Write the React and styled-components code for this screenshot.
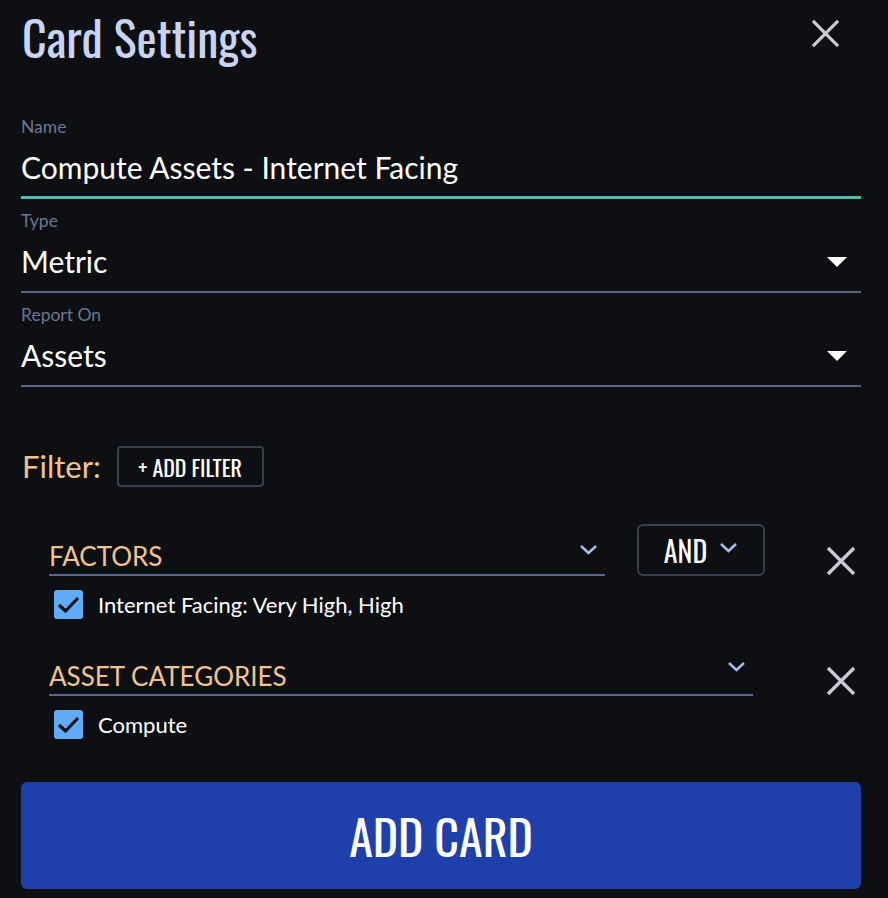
import React from 'react';
import styled, { createGlobalStyle } from 'styled-components';

const GlobalStyle = createGlobalStyle`
  html, body {
    margin: 0;
    padding: 0;
    background: #0e0f13;
  }
  body {
    font-family: Lato, "Noto Sans", sans-serif;
    color: #ffffff;
  }
  * {
    box-sizing: border-box;
  }
`;

const condensed = `"Oswald", "Liberation Sans Narrow", "DejaVu Sans Condensed", sans-serif`;

const Page = styled.div`
  width: 888px;
  min-height: 898px;
  padding: 0 27px 10px 21px;
  background: #0e0f13;
`;

const Header = styled.div`
  display: flex;
  justify-content: space-between;
  align-items: flex-start;
  padding-top: 9px;
  margin-bottom: 53px;
`;

const Title = styled.h1`
  margin: 0 0 0 1px;
  font-family: ${condensed};
  font-weight: 400;
  font-size: 48px;
  line-height: 55px;
  color: #c8d5f2;
`;

const IconButton = styled.button`
  display: flex;
  padding: 0;
  border: 0;
  background: none;
  cursor: pointer;
  margin-top: ${p => p.$top || 0}px;
  margin-right: ${p => p.$right || 0}px;
`;

const Field = styled.div`
  display: flex;
  flex-direction: column;
  margin-bottom: 12px;
`;

const FieldLabel = styled.label`
  font-size: 17.5px;
  line-height: 20px;
  color: #687891;
  margin-bottom: 12px;
`;

const FieldControl = styled.div`
  display: flex;
  align-items: center;
  justify-content: space-between;
  padding-bottom: ${p => (p.$active ? 10 : 11)}px;
  border-bottom: ${p => (p.$active ? '3px solid #4ebdb1' : '2px solid #5b6583')};
`;

const FieldValue = styled.span`
  font-size: 30px;
  line-height: 37px;
  color: #ffffff;
  white-space: nowrap;
`;

const Caret = styled.svg`
  margin-right: 14px;
`;

const FilterBar = styled.div`
  display: flex;
  align-items: center;
  gap: 16px;
  margin-top: 59px;
`;

const FilterLabel = styled.span`
  font-size: 31px;
  line-height: 37px;
  color: #f1c48f;
  margin-left: 1px;
`;

const OutlineButton = styled.button`
  display: flex;
  align-items: center;
  justify-content: center;
  gap: 12px;
  width: ${p => p.$w}px;
  height: ${p => p.$h}px;
  border: 2px solid #393f51;
  border-radius: ${p => p.$radius || 4}px;
  background: transparent;
  color: #ffffff;
  font-family: ${condensed};
  font-size: ${p => p.$size}px;
  cursor: pointer;
  padding: 0;
`;

const FilterList = styled.div`
  display: flex;
  flex-direction: column;
  gap: 42px;
  margin-top: 37px;
  padding-left: 28px;
`;

const FilterGroup = styled.div`
  display: flex;
  flex-direction: column;
`;

const FilterRow = styled.div`
  display: flex;
  align-items: flex-end;
`;

const Select = styled.div`
  display: flex;
  justify-content: space-between;
  align-items: flex-start;
  width: ${p => p.$w}px;
  height: 35px;
  padding-bottom: 2px;
  border-bottom: 2px solid #5a6890;
`;

const SelectText = styled.span`
  font-size: 26px;
  line-height: 31px;
  color: #f1c48f;
  text-transform: uppercase;
  white-space: nowrap;
`;

const Chevron = styled.svg`
  margin-top: ${p => p.$top || 0}px;
  margin-right: ${p => p.$right || 0}px;
  flex: none;
`;

const AndSpacer = styled.div`
  margin-left: 32px;
`;

const Remove = styled(IconButton)`
  margin-left: auto;
  margin-right: 5px;
`;

const CheckRow = styled.label`
  display: flex;
  align-items: center;
  gap: 15px;
  margin-top: 14px;
  margin-left: 5px;
  font-size: 22px;
  color: #ffffff;
`;

const Box = styled.span`
  display: flex;
  align-items: center;
  justify-content: center;
  width: 29px;
  height: 29px;
  border-radius: 3px;
  background: #62abf6;
`;

const PrimaryButton = styled.button`
  display: block;
  width: 100%;
  height: 107px;
  margin-top: 43px;
  border: 0;
  border-radius: 6px;
  background: #1f40aa;
  color: #ffffff;
  font-family: ${condensed};
  font-size: 48px;
  cursor: pointer;
`;

function CloseIcon({ size = 30 }) {
  return (
    <svg width={size} height={size} viewBox="0 0 30 30">
      <path d="M2 2 L28 28 M28 2 L2 28" stroke="#c9cad2" strokeWidth="3.3" fill="none" />
    </svg>
  );
}

function DownCaret() {
  return (
    <Caret width="20" height="10" viewBox="0 0 20 10">
      <polygon points="0,0 20,0 10,10" fill="#ffffff" />
    </Caret>
  );
}

function ChevronDown({ top, right }) {
  return (
    <Chevron $top={top} $right={right} width="19" height="11" viewBox="0 0 19 11">
      <path d="M2 2 L9.5 9 L17 2" stroke="#a7bdf0" strokeWidth="2.4" fill="none" />
    </Chevron>
  );
}

function Checkbox({ label }) {
  return (
    <CheckRow>
      <Box>
        <svg width="29" height="29" viewBox="0 0 29 29">
          <path d="M5 15 L11.5 21 L24 8" stroke="#12141a" strokeWidth="3.2" fill="none" />
        </svg>
      </Box>
      {label}
    </CheckRow>
  );
}

function TextField({ label, value, active, select }) {
  return (
    <Field>
      <FieldLabel>{label}</FieldLabel>
      <FieldControl $active={active}>
        <FieldValue>{value}</FieldValue>
        {select && <DownCaret />}
      </FieldControl>
    </Field>
  );
}

const filters = [
  { name: 'Factors', width: 556, option: 'Internet Facing: Very High, High', join: true, chevronTop: 3 },
  { name: 'Asset Categories', width: 704, option: 'Compute', join: false, chevronTop: 0 },
];

export default function App() {
  return (
    <>
      <GlobalStyle />
      <Page>
        <Header>
          <Title>Card Settings</Title>
          <IconButton $top={10} $right={21}>
            <CloseIcon size={29} />
          </IconButton>
        </Header>

        <TextField label="Name" value="Compute Assets - Internet Facing" active />
        <TextField label="Type" value="Metric" select />
        <TextField label="Report On" value="Assets" select />

        <FilterBar>
          <FilterLabel>Filter:</FilterLabel>
          <OutlineButton $w={147} $h={41} $size={22}>+ ADD FILTER</OutlineButton>
        </FilterBar>

        <FilterList>
          {filters.map(f => (
            <FilterGroup key={f.name}>
              <FilterRow>
                <Select $w={f.width}>
                  <SelectText>{f.name}</SelectText>
                  <ChevronDown top={f.chevronTop} right={7} />
                </Select>
                {f.join && (
                  <AndSpacer>
                    <OutlineButton $w={128} $h={52} $size={28} $radius={6}>
                      AND
                      <ChevronDown top={-6} />
                    </OutlineButton>
                  </AndSpacer>
                )}
                <Remove>
                  <CloseIcon />
                </Remove>
              </FilterRow>
              <Checkbox label={f.option} />
            </FilterGroup>
          ))}
        </FilterList>

        <PrimaryButton>ADD CARD</PrimaryButton>
      </Page>
    </>
  );
}
